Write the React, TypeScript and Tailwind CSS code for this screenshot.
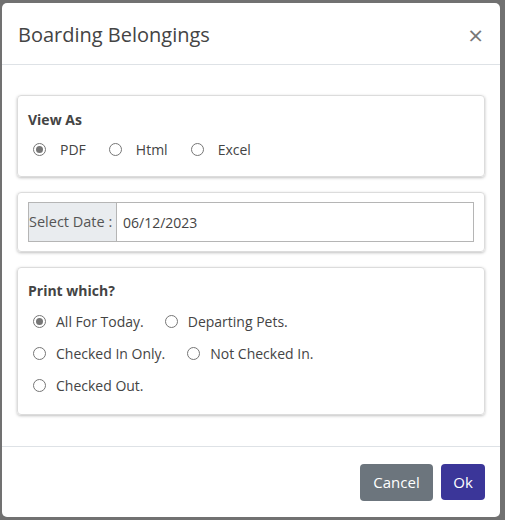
import React from 'react'

const font = { fontFamily: '"Open Sans", "Noto Sans", sans-serif' }

function Radio({ checked, label, gap }: { checked?: boolean; label: string; gap: string }) {
  return (
    <label className={`flex items-center ${gap}`}>
      <span className="flex h-[13px] w-[13px] items-center justify-center rounded-full border border-[#767676] bg-white">
        {checked && <span className="h-[7px] w-[7px] rounded-full bg-[#767676]" />}
      </span>
      <span>{label}</span>
    </label>
  )
}

export default function App() {
  return (
    <div className="h-[520px] w-[505px] bg-[#717171] pl-[2px] pt-[3px]" style={font}>
      <div className="flex h-[514px] w-[498px] flex-col rounded-[5px] bg-white text-[#444]">
        <div className="flex h-[62px] items-center justify-between border-b border-[#dee2e6] pl-4 pr-[17px] pt-[2px]">
          <h2 className="text-[20px] text-[#444]">Boarding Belongings</h2>
          <span className="text-[26px] leading-none text-[#777]">×</span>
        </div>

        <div className="flex flex-1 flex-col gap-[15px] px-[15px] pt-[30px] text-[14px]">
          <div className="h-[82px] rounded-[4px] border border-[#dcdcdc] px-[10px] pt-[13px] shadow-[0_1px_3px_rgba(0,0,0,0.25)]">
            <div className="font-bold text-[#444]">View As</div>
            <div className="mt-[9px] flex items-center gap-[23px] pl-[5px]">
              <Radio checked label="PDF" gap="gap-[14px]" />
              <Radio label="Html" gap="gap-[14px]" />
              <Radio label="Excel" gap="gap-[14px]" />
            </div>
          </div>

          <div className="h-[60px] rounded-[4px] border border-[#dcdcdc] px-[10px] pt-[9px] shadow-[0_1px_3px_rgba(0,0,0,0.25)]">
            <div className="flex h-[40px] border border-[#b5b5b5]">
              <div className="flex w-[87px] items-center bg-[#e9ecef] text-[14.5px] text-[#555]">Select Date :</div>
              <div className="flex flex-1 items-center border-l border-[#b5b5b5] pl-[6px] text-[#444]">06/12/2023</div>
            </div>
          </div>

          <div className="h-[148px] rounded-[4px] border border-[#dcdcdc] px-[10px] pt-[12px] shadow-[0_1px_3px_rgba(0,0,0,0.25)]">
            <div className="font-bold text-[#444]">Print which?</div>
            <div className="mt-[10px] flex flex-col gap-[11px] pl-[5px]">
              <div className="flex items-center gap-[21px]">
                <Radio checked label="All For Today." gap="gap-[10px]" />
                <Radio label="Departing Pets." gap="gap-[10px]" />
              </div>
              <div className="flex items-center gap-[22px]">
                <Radio label="Checked In Only." gap="gap-[10px]" />
                <Radio label="Not Checked In." gap="gap-[10px]" />
              </div>
              <div className="flex items-center">
                <Radio label="Checked Out." gap="gap-[10px]" />
              </div>
            </div>
          </div>
        </div>

        <div className="flex h-[71px] items-center justify-end gap-[8px] border-t border-[#dee2e6] px-[15px]">
          <button className="h-[37px] w-[73px] rounded-[4px] bg-[#6c757d] text-[15px] text-white">Cancel</button>
          <button className="h-[36px] w-[44px] rounded-[4px] bg-[#3b3699] text-[15px] text-white">Ok</button>
        </div>
      </div>
    </div>
  )
}
